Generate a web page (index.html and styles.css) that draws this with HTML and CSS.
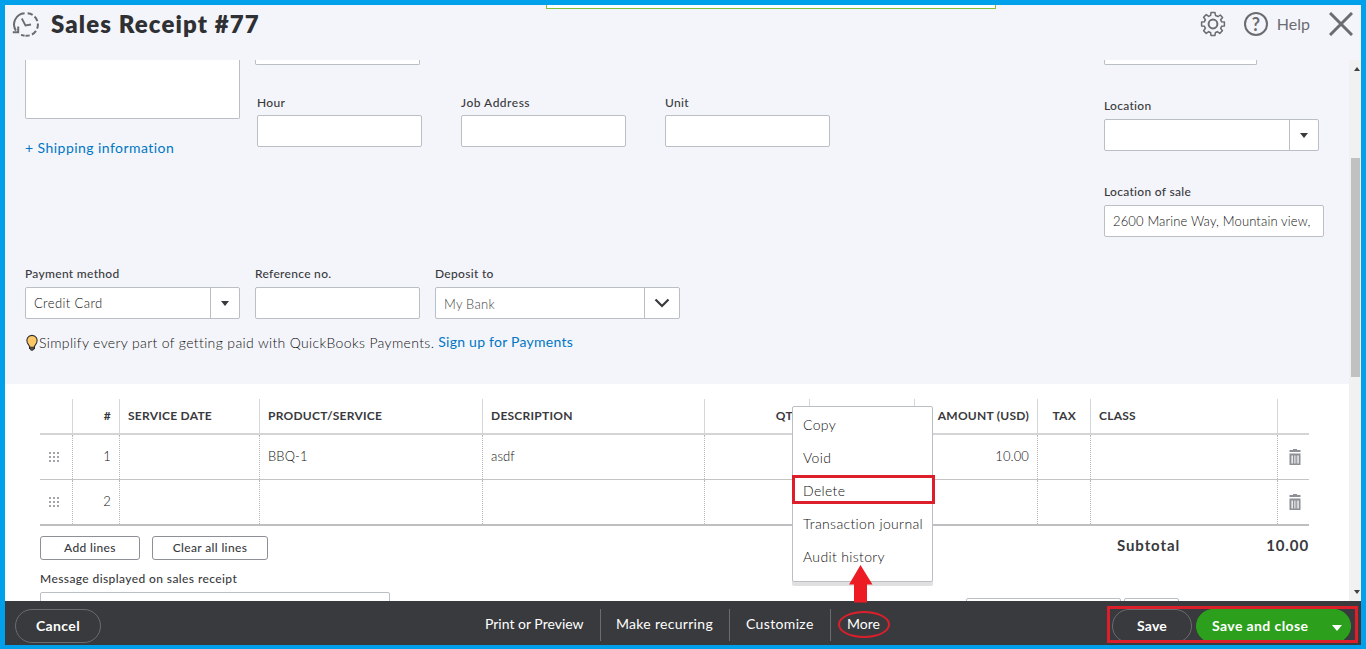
FILE: index.html
```html
<!DOCTYPE html>
<html lang="en">
<head>
<meta charset="utf-8">
<title>Sales Receipt #77</title>
<link rel="stylesheet" href="styles.css">
</head>
<body>
<div class="frame">
  <div class="toast-edge"></div>
  <header class="topbar">
    <svg class="history" width="27" height="27" viewBox="0 0 27 27" fill="none" stroke="#6b6c72" stroke-width="2">
      <path d="M12.6 2.2A11.3 11.3 0 0 0 3.9 19.6" />
      <path d="M15.6 2.2A11.3 11.3 0 0 1 13.5 24.8" stroke-dasharray="5.4 2.4"/>
      <path d="M12.6 24.8L9 23.9"/>
      <path d="M0.8 21.2H6.2V15.6" stroke-width="2"/>
      <path d="M9.8 7.5L13.5 14.5L19 13.5" stroke-width="1.8"/>
    </svg>
    <h1 class="title">Sales Receipt #77</h1>
    <svg class="gear" width="26" height="26" viewBox="0 0 26 26" fill="none" stroke="#6b6c72" stroke-width="1.5" stroke-linejoin="round">
      <path d="M11 1.6H15L15.5 4.4Q17 4.7 18 5.6L20.3 4L22.6 6.4L20.6 8.8Q21.3 9.8 21.5 10.8L24.4 11V15L21.5 15.3Q21.2 16.6 20.6 17.3L22.4 19.8L19.8 22.4L17.3 20.6Q16.4 21.3 15.4 21.5L15 24.4H11L10.6 21.5Q9.6 21.3 8.7 20.6L6.2 22.4L3.6 19.8L5.4 17.3Q4.8 16.5 4.5 15.3L1.6 15V11L4.5 10.7Q4.8 9.6 5.4 8.8L3.6 6.2L6.2 3.6L8.7 5.4Q9.6 4.7 10.6 4.5Z"/>
      <circle cx="13" cy="13" r="4.4" stroke-width="2"/>
    </svg>
    <span class="help-icon">?</span>
    <span class="help">Help</span>
    <svg class="close" width="24" height="24" viewBox="0 0 24 24" stroke="#6b6c72" stroke-width="3"><path d="M1 1L23 23M23 1L1 23"/></svg>
  </header>

  <div class="scroll">
    <main class="content">
      <section class="form">
        <div class="form-top">
          <div class="address">
            <div class="box address-box"></div>
            <a class="link shipping">+ Shipping information</a>
          </div>
          <div class="middle">
            <div class="box cut cut-date"></div>
            <div class="customs">
              <div class="field w165"><label class="hour">Hour</label><div class="box input"></div></div>
              <div class="field w165"><label class="job">Job Address</label><div class="box input"></div></div>
              <div class="field w165"><label class="unit">Unit</label><div class="box input"></div></div>
            </div>
          </div>
          <div class="places">
            <div class="box cut cut-no"></div>
            <div class="field location"><label class="loc">Location</label>
              <div class="box input select"><span class="value"></span><span class="drop"><i class="caret"></i></span></div>
            </div>
            <div class="field sale"><label class="los">Location of sale</label>
              <div class="box input"><span class="value way">2600 Marine Way, Mountain view,</span></div>
            </div>
          </div>
        </div>
        <div class="payment">
          <div class="field w215"><label class="pm">Payment method</label>
            <div class="box input select"><span class="value card">Credit Card</span><span class="drop"><i class="caret"></i></span></div>
          </div>
          <div class="field w165"><label class="ref">Reference no.</label><div class="box input"></div></div>
          <div class="field w245"><label class="dep">Deposit to</label>
            <div class="box input select"><span class="value bank">My Bank</span><span class="drop wide"><svg width="16" height="10" viewBox="0 0 16 10" fill="none" stroke="#393a3d" stroke-width="2.2"><path d="M1.5 1.5L8 8L14.5 1.5"/></svg></span></div>
          </div>
        </div>
        <div class="promo">
          <svg width="14" height="17" viewBox="0 0 14 17"><path d="M4.6 14.5V12.4L2.3 8.8A5.2 5.2 0 1 1 11.7 8.8L9.4 12.4V14.5Z" fill="#fcc867" stroke="#2e2e2e" stroke-width="1.1"/><path d="M4.8 13.2H9.2V15L8 16.2H6L4.8 15Z" fill="#5b5346" stroke="#222" stroke-width=".8"/></svg>
          <span class="promo-text">Simplify every part of getting paid with QuickBooks Payments.</span>
          <a class="link signup">Sign up for Payments</a>
        </div>
      </section>

      <section class="lines">
        <div class="row head">
          <span></span><span class="right">#</span><span class="h-date">SERVICE DATE</span><span class="h-prod">PRODUCT/SERVICE</span><span class="h-desc">DESCRIPTION</span><span class="right">QTY</span><span class="right">RATE</span><span class="right h-amt">AMOUNT (USD)</span><span class="right h-tax">TAX</span><span class="h-class">CLASS</span><span></span>
        </div>
        <div class="row item">
          <span class="grip"><svg width="11" height="11" viewBox="0 0 11 11"><use href="#dots"/></svg></span><span class="right">1</span><span></span><span class="bbq">BBQ-1</span><span class="asdf">asdf</span><span></span><span></span><span class="right amount">10.00</span><span></span><span></span><span class="trash"><svg width="12" height="17" viewBox="0 0 12 17"><use href="#bin"/></svg></span>
        </div>
        <div class="row item last">
          <span class="grip"><svg width="11" height="11" viewBox="0 0 11 11"><use href="#dots"/></svg></span><span class="right">2</span><span></span><span></span><span></span><span></span><span></span><span></span><span></span><span></span><span class="trash"><svg width="12" height="17" viewBox="0 0 12 17"><use href="#bin"/></svg></span>
        </div>
        <div class="summary">
          <div class="left">
            <div class="buttons"><button class="small add">Add lines</button><button class="small clear">Clear all lines</button></div>
            <label class="msg">Message displayed on sales receipt</label>
            <div class="box message"></div>
          </div>
          <div class="totals">
            <div class="subtotal"><span class="sub-label">Subtotal</span><span class="sub-value">10.00</span></div>
            <div class="stubs"><div class="box stub1"></div><div class="box stub2"></div></div>
          </div>
        </div>
      </section>
    </main>
    <div class="scrollbar"><i class="up"></i><i class="thumb"></i><i class="down"></i></div>
  </div>

  <footer class="bottombar">
    <button class="pill cancel">Cancel</button>
    <nav class="actions"><a class="a-print">Print or Preview</a><a class="a-make">Make recurring</a><a class="a-cust">Customize</a><a class="a-more">More</a></nav>
    <div class="saves"><button class="pill save">Save</button><button class="pill save-close"><span>Save and close</span><i class="caret-white"></i></button></div>
  </footer>

  <div class="menu">
    <a class="m-copy">Copy</a><a class="m-void">Void</a><a class="m-del">Delete</a><a class="m-journal">Transaction journal</a><a class="m-audit">Audit history</a>
  </div>
  <div class="mark mark-delete"></div>
  <div class="mark mark-save"></div>
  <div class="mark mark-more"></div>
  <svg class="arrow" width="24" height="38" viewBox="0 0 24 38"><path d="M11.5 0L23.5 19.5H18V37.5H5V19.5H0Z" fill="#ed1c24"/></svg>
</div>
<svg class="defs" width="0" height="0">
  <defs>
    <g id="dots" fill="#a3a4a8"><path d="M0 0h2v2H0zM4 0h2v2h-2zM8 0h2v2h-2zM0 4h2v2H0zM4 4h2v2h-2zM8 4h2v2h-2zM0 8h2v2H0zM4 8h2v2h-2zM8 8h2v2h-2z"/></g>
    <g id="bin" fill="#8d9096"><path d="M4 0h4v1h3.5v2H.5V1H4z"/><path fill-rule="evenodd" d="M.5 4.5h11V16H.5zM2.5 6.5V14.5H3.8V6.5zM5 6.5V14.5H5.6V6.5zM6.6 6.5V14.5H7.2V6.5zM8.4 6.5V14.5H9.7V6.5z"/></g>
  </defs>
</svg>
</body>
</html>
```
FILE: styles.css
```css
* { box-sizing: border-box; }
body { margin: 0; font-family: Lato, "Open Sans", sans-serif; color: #393a3d; overflow: hidden; }
button { font-family: inherit; padding: 0; cursor: pointer; }
a, label, span { white-space: nowrap; }
.defs { position: absolute; }

.frame { position: relative; width: 1366px; height: 649px; border: 5px solid #00a0ea; border-bottom-width: 4px; background: #f4f5fa; display: flex; flex-direction: column; overflow: hidden; }
.toast-edge { position: absolute; left: 541px; top: 0; width: 450px; height: 4px; background: #fff; border: 1px solid #7fc03c; border-top: 0; }

.topbar { height: 55px; flex: none; display: flex; align-items: flex-start; padding: 5px 8px 0 7px; }
.history { margin-top: 1px; }
.title { margin: -1px auto 0 12px; font-size: 24px; line-height: 30px; font-weight: 800; letter-spacing: 1.12px; color: #2f3033; }
.gear { margin: 1px 18px 0 0; }
.help-icon { width: 24px; height: 24px; margin-top: 2px; border: 2px solid #6b6c72; border-radius: 50%; font-size: 18px; line-height: 20px; font-weight: 700; text-align: center; color: #6b6c72; }
.help { margin: 2px 19px 0 9px; font-size: 16px; line-height: 23px; color: #6b6c72; }
.close { margin-top: 2px; }

.scroll { height: 541px; flex: none; display: flex; }
.content { width: 1344px; overflow: hidden; }
.scrollbar { width: 12px; background: #f1f1f1; display: flex; flex-direction: column; align-items: center; padding-top: 7px; }
.up { margin-left: 4px; border: 3.5px solid transparent; border-top: 0; border-bottom: 4px solid #404040; }
.thumb { width: 9px; height: 219px; margin: 87px 0 213px 1px; background: #c1c1c1; }
.down { margin-left: 4px; border: 3.5px solid transparent; border-bottom: 0; border-top: 4px solid #404040; }

.form { height: 324px; padding-left: 20px; }
.box { background: #fff; border: 1px solid #babec5; border-radius: 2px; }
.form-top { height: 206px; display: flex; }
.address { width: 230px; }
.address-box { width: 215px; height: 59px; border-top: 0; border-radius: 0 0 2px 2px; }
.link { color: #0077c5; }
.shipping { display: block; margin-top: 19px; font-size: 14px; line-height: 20px; letter-spacing: .45px; }
.middle { width: 849px; }
.cut { height: 5px; border-top: 0; border-radius: 0 0 2px 2px; }
.cut-date { width: 165px; }
.cut-no { width: 153px; }
.customs { display: flex; gap: 39px; margin: 30px 0 0 2px; }
.field { display: flex; flex-direction: column; }
.field label { font-size: 12px; line-height: 16px; font-weight: 500; letter-spacing: .3px; margin-bottom: 4px; }
.field .job { letter-spacing: .5px; }
.w165 { width: 165px; } .w215 { width: 215px; } .w245 { width: 245px; }
.input { height: 32px; display: flex; }
.value { flex: 1; padding-left: 8px; font-size: 13px; font-weight: 300; color: #111; line-height: 31px; letter-spacing: .4px; overflow: hidden; }
.bank { color: #444; line-height: 33px; letter-spacing: .25px; }
.way { letter-spacing: .14px; }
.drop { width: 29px; border-left: 1px solid #babec5; display: flex; align-items: center; justify-content: center; }
.drop.wide { width: 35px; }
.caret { border: 4px solid transparent; border-bottom: 0; border-top: 5px solid #393a3d; }
.location { width: 215px; margin-top: 33px; }
.location label, .sale label { margin-bottom: 5px; }
.sale { width: 220px; margin-top: 33px; }
.payment { display: flex; gap: 15px; }
.payment label { margin-bottom: 5px; }
.promo { display: flex; margin-top: 12px; font-size: 14px; line-height: 24px; }
.promo svg { margin-top: 3px; }
.promo-text { letter-spacing: .35px; margin-right: 4px; font-weight: 300; color: #111; }
.signup { letter-spacing: .25px; line-height: 22px; }

.lines { height: 217px; background: #fff; padding: 15px 0 0 35px; }
.row { width: 1269px; display: grid; grid-template-columns: 33px 47px 140px 223px 222px 105px 105px 123px 53px 187px 31px; }
.row > span { border-right: 1px solid #d4d7dc; padding: 0 8px; font-size: 12px; }
.row > span:last-child { border-right: 0; }
.row .right { text-align: right; }
.head { height: 36px; border-bottom: 2px solid #d4d4d4; }
.head > span { line-height: 33px; font-weight: 700; letter-spacing: .25px; }
.item { height: 45px; border-bottom: 1px solid #c4c4c4; }
.item > span { border-right: 1px dotted #b8b8b8; line-height: 43px; font-size: 13px; font-weight: 300; color: #111; letter-spacing: .1px; }
.item.last { height: 46px; border-bottom: 2px solid #bfbfbf; }
.row > .grip, .row > .trash { display: flex; align-items: center; padding: 0 0 0 9px; }
.row > .trash { padding: 1px 0 0 11px; }
.head > .h-tax { padding-right: 14px; }

.summary { display: flex; width: 1269px; }
.left { width: 926px; padding-top: 10px; }
.buttons { display: flex; gap: 12px; }
.small { height: 24px; background: #fff; border: 1px solid #8d9096; border-radius: 3px; padding-bottom: 2px; font-size: 12px; font-weight: 500; color: #393a3d; letter-spacing: .35px; }
.add { width: 100px; } .clear { width: 116px; }
.msg { display: block; margin: 11px 0 5px; font-size: 12px; line-height: 16px; font-weight: 500; letter-spacing: .4px; }
.message { width: 350px; height: 60px; }
.totals { flex: 1; }
.subtotal { display: flex; justify-content: space-between; padding: 9px 0 0 151px; font-size: 15px; line-height: 20px; font-weight: 700; letter-spacing: .9px; }
.stubs { display: flex; gap: 3px; margin-top: 43px; }
.stub1 { width: 155px; height: 30px; } .stub2 { width: 55px; height: 30px; }

.bottombar { height: 44px; flex: none; background: #393a3d; display: flex; align-items: flex-start; padding: 8px 10px 0 10px; }
.pill { height: 34px; border: 1px solid #6b6c72; border-radius: 17px; background: #393a3d; color: #fff; font-size: 14px; font-weight: 700; padding-bottom: 2px; letter-spacing: .2px; }
.cancel { width: 86px; letter-spacing: .4px; }
.actions { display: flex; margin-left: 369px; }
.actions a { color: #fff; font-size: 14px; line-height: 29px; height: 32px; padding: 0 15px; border-right: 1px solid #6b6c72; }
.a-print { width: 131px; } .a-make { width: 129px; } .a-cust { width: 101px; } .actions .a-more { border: 0; }
.actions .a-cust { padding-left: 16px; letter-spacing: .35px; }
.actions .a-make { letter-spacing: .3px; }
.actions .a-more { padding-left: 16px; }
.saves { display: flex; gap: 4px; margin-left: auto; }
.save { width: 80px; }
.save-close { width: 155px; background: #2ca01c; border-color: #2ca01c; display: flex; align-items: center; padding-left: 15px; letter-spacing: .4px; }
.save-close span { width: 120px; text-align: left; }
.caret-white { margin-top: 6px; border: 5px solid transparent; border-bottom: 0; border-top: 6px solid #fff; }

.menu { position: absolute; left: 787px; top: 401px; width: 141px; height: 176px; background: #fff; border: 1px solid #babec5; border-radius: 2px; box-shadow: 0 4px 0 #e0e0e0; padding: 1px 0 0 10px; display: flex; flex-direction: column; font-size: 14px; line-height: 33px; font-weight: 300; color: #111; letter-spacing: .35px; }
.mark { position: absolute; border: 3px solid #dc1f2b; }
.mark-delete { left: 787px; top: 470px; width: 143px; height: 29px; }
.mark-save { left: 1102px; top: 601px; width: 251px; height: 37px; }
.mark-more { left: 833px; top: 606px; width: 52px; height: 27px; border-width: 2px; border-radius: 50%; }
.arrow { position: absolute; left: 844px; top: 560px; }
```
